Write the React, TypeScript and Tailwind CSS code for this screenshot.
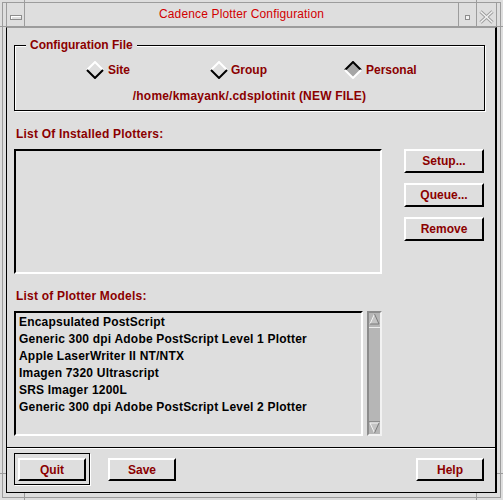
import React from "react";

function Diamond({ selected }: { selected?: boolean }) {
  return (
    <svg width="18" height="18" viewBox="0 0 18 18" className="block shrink-0">
      {selected && <polygon points="9,1.5 16.5,9 9,16.5 1.5,9" fill="#a6a6a6" />}
      <polyline points="1,9 9,1 17,9" fill="none" stroke={selected ? "#000" : "#fff"} strokeWidth="2" />
      <polyline points="1,9 9,17 17,9" fill="none" stroke={selected ? "#fff" : "#000"} strokeWidth="2" />
    </svg>
  );
}

function MButton({ label, className }: { label: string; className: string }) {
  return (
    <div
      className={`flex items-center justify-center border-2 border-t-white border-l-white border-r-black border-b-black bg-[#dedede] text-[12px] font-bold leading-none text-[#8b0000] ${className}`}
    >
      {label}
    </div>
  );
}

function Arrow({ down }: { down?: boolean }) {
  return (
    <svg width="11" height="12" viewBox="0 0 11 12" className="block shrink-0">
      {down ? (
        <>
          <polygon points="1,1 10,1 5.5,11" fill="#c4c4c4" />
          <line x1="1" y1="1" x2="10" y2="1" stroke="#f4f4f4" />
          <line x1="1" y1="1" x2="5.5" y2="11" stroke="#f4f4f4" />
          <line x1="10" y1="1" x2="5.5" y2="11" stroke="#7c7c7c" />
        </>
      ) : (
        <>
          <polygon points="5.5,1 10,11 1,11" fill="#c4c4c4" />
          <line x1="5.5" y1="1" x2="1" y2="11" stroke="#f4f4f4" />
          <line x1="5.5" y1="1" x2="10" y2="11" stroke="#7c7c7c" />
          <line x1="1" y1="11" x2="10" y2="11" stroke="#7c7c7c" />
        </>
      )}
    </svg>
  );
}

const models = [
  "Encapsulated PostScript",
  "Generic 300 dpi Adobe PostScript Level 1 Plotter",
  "Apple LaserWriter II NT/NTX",
  "Imagen 7320 Ultrascript",
  "SRS Imager 1200L",
  "Generic 300 dpi Adobe PostScript Level 2 Plotter",
];

export default function App() {
  return (
    <div className="relative w-[503px] h-[500px] overflow-hidden bg-[#dedede] p-[2px] font-['Liberation_Sans',Arial,sans-serif]">
      {/* window frame */}
      <div className="flex h-full flex-col border border-[#9c9c9c] pb-[4px]">
        {/* title bar */}
        <div className="mx-[3px] flex h-[24px] shrink-0 border-x border-b border-[#9c9c9c]">
          <div className="w-[17px] pl-[3px] pt-[12px]">
            <div className="h-[5px] w-[12px] border border-[#8c8c8c] shadow-[inset_1px_1px_0_#fff]" />
          </div>
          <div className="flex flex-1 items-center justify-center border-l border-[#9c9c9c] text-[12px] leading-[15px] tracking-[0.15px] text-[#d20000]">
            Cadence Plotter Configuration
          </div>
          <div className="flex w-[18px] justify-center border-l border-[#9c9c9c] pt-[12px]">
            <div className="h-[5px] w-[5px] border border-[#8c8c8c] bg-[#f2f2f2]" />
          </div>
          <div className="flex w-[20px] justify-center border-l border-[#9c9c9c] pt-[7px]">
            <svg width="15" height="14" viewBox="0 0 15 14" className="block">
              <line x1="1.5" y1="1.5" x2="13.5" y2="12.5" stroke="#9c9c9c" strokeWidth="3.2" />
              <line x1="13.5" y1="1.5" x2="1.5" y2="12.5" stroke="#9c9c9c" strokeWidth="3.2" />
              <line x1="1.5" y1="1.5" x2="13.5" y2="12.5" stroke="#f2f2f2" strokeWidth="1.4" />
              <line x1="13.5" y1="1.5" x2="1.5" y2="12.5" stroke="#f2f2f2" strokeWidth="1.4" />
            </svg>
          </div>
        </div>

        {/* client area */}
        <div className="mx-[3px] flex flex-1 flex-col border-l border-t border-r-2 border-b border-l-black border-t-[#9c9c9c] border-r-black border-b-black">
          <div className="flex flex-col pl-[7px] pr-[10px] pt-[17px]">
            {/* Configuration File group */}
            <div className="relative flex h-[66px] flex-col border border-black shadow-[1px_1px_0_#fff,inset_1px_1px_0_#fff]">
              <div className="absolute left-[11px] top-[-8px] bg-[#dedede] px-[4px] text-[12px] font-bold leading-[15px] text-[#8b0000]">
                Configuration File
              </div>
              <div className="mt-[15px] flex h-[18px] pl-[71px]">
                <div className="flex w-[124px] items-center gap-[4px]">
                  <Diamond />
                  <span className="text-[12px] font-bold leading-[15px] text-[#8b0000]">Site</span>
                </div>
                <div className="flex w-[134px] items-center gap-[3px]">
                  <Diamond />
                  <span className="text-[12px] font-bold leading-[15px] text-[#8b0000]">Group</span>
                </div>
                <div className="flex items-center gap-[4px]">
                  <Diamond selected />
                  <span className="text-[12px] font-bold leading-[15px] text-[#8b0000]">Personal</span>
                </div>
              </div>
              <div className="mt-[10px] h-[15px] text-center text-[12px] font-bold leading-[15px] tracking-[0.2px] text-[#8b0000]">
                /home/kmayank/.cdsplotinit (NEW FILE)
              </div>
            </div>

            <div className="mt-[16px] h-[15px] pl-[2px] text-[12px] font-bold leading-[15px] tracking-[0.2px] text-[#8b0000]">
              List Of Installed Plotters:
            </div>
            <div className="mt-[7px] flex h-[125px]">
              <div className="h-full w-[368px] border-2 border-t-black border-l-black border-r-white border-b-white" />
              <div className="ml-auto mr-[1px] flex w-[80px] flex-col gap-[10px]">
                <MButton label="Setup..." className="h-[24px]" />
                <MButton label="Queue..." className="h-[24px]" />
                <MButton label="Remove" className="h-[24px]" />
              </div>
            </div>

            <div className="mt-[15px] h-[15px] pl-[2px] text-[12px] font-bold leading-[15px] tracking-[0.2px] text-[#8b0000]">
              List of Plotter Models:
            </div>
            <div className="mt-[7px] flex h-[125px]">
              <div className="h-full w-[349px] border-2 border-t-black border-l-black border-r-white border-b-white pl-[3px] pt-[1px]">
                {models.map((m) => (
                  <div key={m} className="h-[17px] whitespace-nowrap text-[12px] font-bold leading-[17px] tracking-[0.2px] text-black">
                    {m}
                  </div>
                ))}
              </div>
              <div className="ml-[4px] flex h-full w-[15px] flex-col border-2 border-t-[#8c8c8c] border-l-[#8c8c8c] border-r-[#f2f2f2] border-b-[#f2f2f2] bg-[#b6b6b6]">
                <Arrow />
                <div className="mt-[2px] flex-1 border-t border-b border-t-[#eeeeee] border-b-[#8c8c8c]" />
                <Arrow down />
              </div>
            </div>
          </div>

          {/* separator */}
          <div className="mt-[11px] h-[2px] border-t border-b border-t-black border-b-white" />

          {/* bottom buttons */}
          <div className="mt-[4px] flex items-start pl-[7px] pr-[10px]">
            <div className="h-[32px] w-[76px] border border-black pl-[3px] pt-[4px] shadow-[1px_1px_0_#fff]">
              <MButton label="Quit" className="h-[23px] w-[68px]" />
            </div>
            <MButton label="Save" className="ml-[18px] mt-[5px] h-[23px] w-[68px]" />
            <MButton label="Help" className="ml-auto mr-[1px] mt-[5px] h-[23px] w-[68px]" />
          </div>
        </div>
      </div>

      {/* resize-corner ticks of the window frame */}
      <div className="absolute left-[24px] top-0 h-[3px] w-px bg-[#9c9c9c]" />
      <div className="absolute left-[476px] top-0 h-[3px] w-px bg-[#9c9c9c]" />
      <div className="absolute left-0 top-[26px] h-px w-[6px] bg-[#9c9c9c]" />
      <div className="absolute right-0 top-[26px] h-px w-[6px] bg-[#9c9c9c]" />
      <div className="absolute left-0 top-[473px] h-px w-[6px] bg-[#9c9c9c]" />
      <div className="absolute right-0 top-[473px] h-px w-[6px] bg-[#9c9c9c]" />
      <div className="absolute left-[24px] top-[493px] h-[7px] w-px bg-[#9c9c9c]" />
      <div className="absolute left-[476px] top-[493px] h-[7px] w-px bg-[#9c9c9c]" />
    </div>
  );
}
